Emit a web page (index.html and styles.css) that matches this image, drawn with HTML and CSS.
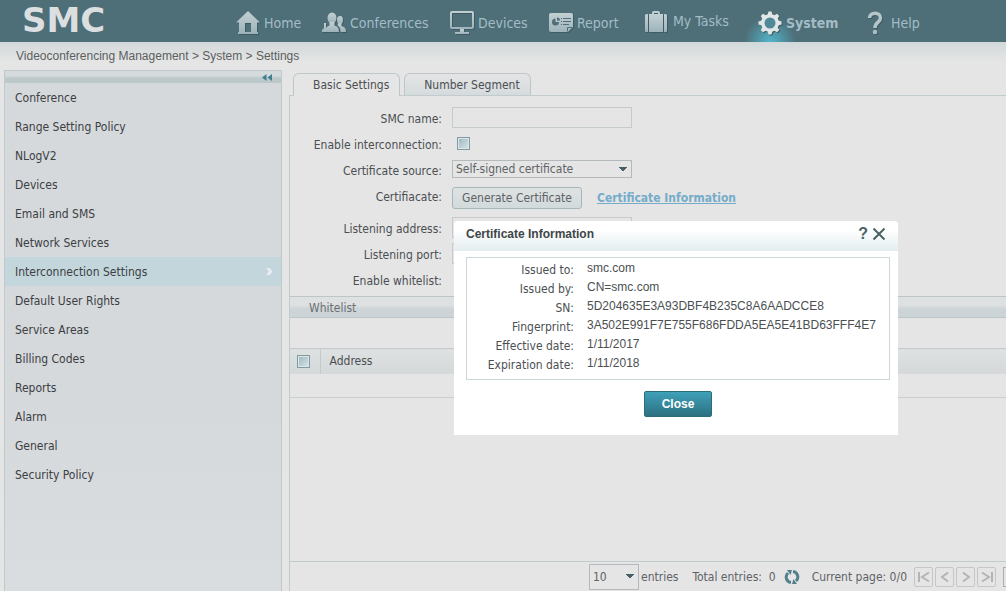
FILE: index.html
```html
<!DOCTYPE html>
<html lang="en">

<head>
    <meta charset="UTF-8">
    <meta name="viewport" content="width=device-width, initial-scale=1.0">
    <title>SMC - Settings</title>
    <link rel="stylesheet" href="styles.css">
</head>

<body>
    <header class="header">
        <a class="logo" href="#">SMC</a>
        <nav class="nav">
            <a href="#">
                <svg width="24" height="24" viewBox="0 0 24 24" fill="url(#steel)">
                    <defs>
                        <linearGradient id="steel" x1="0" y1="0" x2="0" y2="1">
                            <stop offset="0" stop-color="#c3d0d3" />
                            <stop offset="1" stop-color="#9db3b9" />
                        </linearGradient>
                    </defs>
                    <path fill-rule="evenodd" d="M12 0L24 11.500H21V21H22V23H2V21H3V11.500H0ZM9 12V21H15V12Z" />
                </svg>
                <span>Home</span>
            </a>
            <a href="#">
                <svg width="24" height="24" viewBox="0 0 24 24" fill="url(#steel)">
                    <ellipse cx="10" cy="7" rx="4.500" ry="5.500" />
                    <path d="M3 21C3 17 4 16 7.500 14.500V11H12.500V14.500C16 16 17 17 17 21Z" />
                    <ellipse cx="18" cy="9" rx="3" ry="4" />
                    <path d="M16.500 12H19.500V15C22.500 16 24 17 24 21H18.500C18.500 17 17.500 15.500 15.500 14.500Z" />
                    <path d="M0 21V19C0 18 2 18 2 17V12H4V17L5 19V21Z" />
                </svg>
                <span>Conferences</span>
            </a>
            <a href="#">
                <svg width="24" height="24" viewBox="0 0 24 24" fill="url(#steel)">
                    <path fill-rule="evenodd" d="M2 0H22Q24 0 24 2V16Q24 18 22 18H2Q0 18 0 16V2Q0 0 2 0ZM2 2V16H22V2Z" />
                    <path d="M10 18H14V21H19V23H5V21H10Z" />
                </svg>
                <span>Devices</span>
            </a>
            <a href="#">
                <svg width="24" height="24" viewBox="0 0 24 24" fill="url(#steel)">
                    <path d="M2 2H22Q24 2 24 4V16L19 21H2Q0 21 0 19V4Q0 2 2 2Z" />
                    <path d="M6.500 7.500A3.500 3.500 0 1 0 10 11H6.500Z" fill="#4e6e78" />
                    <path d="M8 6.500A3 3 0 0 1 11 9.500H8Z" fill="#4e6e78" />
                    <path d="M12 7.500H13M14 7.500H22M12 10.500H13M14 10.500H22M12 13.500H13M14 13.500H20" stroke="#4e6e78" />
                    <path d="M18.500 20.500V16.500H23" stroke="#4e6e78" fill="none" />
                </svg>
                <span>Report</span>
            </a>
            <a href="#" class="tasks">
                <svg width="24" height="24" viewBox="0 -2 24 24" fill="url(#steel)">
                    <path d="M0 4Q0 3 3 3V21H1Q0 21 0 20ZM4 3H18V21H4ZM19 3Q22 3 22 4V20Q22 21 21 21H19Z" />
                    <path d="M8 3V2Q8 1 9 1H13Q14 1 14 2V3" fill="none" stroke="#c3d0d3" stroke-width="2" />
                </svg>
                <span>My Tasks</span>
            </a>
            <a href="#" class="active">
                <svg width="24" height="24" viewBox="0 0 24 24">
                    <g fill="#e1e6e7">
                        <path id="teeth" d="M9.500 4L10.500 0.500H13.500L14.500 4V20L13.500 23.500H10.500L9.500 20Z" />
                        <use href="#teeth" transform="rotate(45 12 12)" />
                        <use href="#teeth" transform="rotate(90 12 12)" />
                        <use href="#teeth" transform="rotate(135 12 12)" />
                        <circle cx="12" cy="12" r="9" />
                    </g>
                    <circle cx="12" cy="12" r="5.500" fill="#50899a" />
                </svg>
                <span>System</span>
            </a>
            <a href="#" class="help">
                <svg width="16" height="24" viewBox="0 0 16 24" fill="none">
                    <path d="M2.500 7C2.500 0.500 13.500 0.500 13.500 7C13.500 11.500 8 11 8 17" stroke="#b5c5c9" stroke-width="3.500" />
                    <circle cx="8" cy="21" r="2.300" fill="#a9bcc1" />
                </svg>
                <span>Help</span>
            </a>
        </nav>
    </header>

    <div class="breadcrumb">Videoconferencing Management &gt; System &gt; Settings</div>

    <div class="content">
        <aside class="sidebar">
            <div class="sidebar-top">
                <button class="collapse" aria-label="Collapse menu">
                    <svg width="10" height="7" viewBox="0 0 10 7" fill="#3f7f8f">
                        <path d="M4.500 0V7L0 3.500ZM10 0V7L5.500 3.500Z" />
                    </svg>
                </button>
            </div>
            <a href="#">Conference</a>
            <a href="#">Range Setting Policy</a>
            <a href="#">NLogV2</a>
            <a href="#">Devices</a>
            <a href="#">Email and SMS</a>
            <a href="#">Network Services</a>
            <a href="#" class="selected">Interconnection Settings
                <svg width="7" height="7" viewBox="0 0 7 7" fill="#e6eef0">
                    <path d="M0 0H3.500L6.500 3.500L3.500 7H0L3 3.500Z" />
                </svg>
            </a>
            <a href="#">Default User Rights</a>
            <a href="#">Service Areas</a>
            <a href="#">Billing Codes</a>
            <a href="#">Reports</a>
            <a href="#">Alarm</a>
            <a href="#">General</a>
            <a href="#">Security Policy</a>
        </aside>

        <main class="main">
            <div class="tabs">
                <button class="tab current">Basic Settings</button>
                <button class="tab">Number Segment</button>
            </div>
            <div class="panel">
                <form class="form">
                    <label for="smcName">SMC name:</label>
                    <div class="field"><input class="text" type="text" id="smcName"></div>

                    <label for="interconnection">Enable interconnection:</label>
                    <div class="field indent"><input class="check" type="checkbox" id="interconnection"></div>

                    <label for="source">Certificate source:</label>
                    <div class="field">
                        <select class="select" id="source">
                            <option>Self-signed certificate</option>
                        </select>
                    </div>

                    <label for="generate">Certifiacate:</label>
                    <div class="field">
                        <button class="btn" type="button" id="generate">Generate Certificate</button>
                        <a class="info-link" href="#certificate">Certificate Information</a>
                    </div>

                    <label for="address">Listening address:</label>
                    <div class="field"><input class="text" type="text" id="address"></div>

                    <label for="port">Listening port:</label>
                    <div class="field"><input class="text" type="text" id="port"></div>

                    <label for="enableWhitelist">Enable whitelist:</label>
                    <div class="field indent"><input class="check" type="checkbox" id="enableWhitelist"></div>
                </form>

                <h2 class="section">Whitelist</h2>

                <table class="whitelist">
                    <thead>
                        <tr>
                            <th class="check-col"><input class="check" type="checkbox" aria-label="Select all"></th>
                            <th>Address</th>
                        </tr>
                    </thead>
                    <tbody>
                        <tr>
                            <td colspan="2"></td>
                        </tr>
                    </tbody>
                </table>

                <div class="pager">
                    <select class="select page-size" id="pageSize">
                        <option>10</option>
                    </select>
                    <label for="pageSize">entries</label>
                    <span class="total">Total entries:&nbsp; 0</span>
                    <button class="refresh" aria-label="Refresh">
                        <svg width="16" height="16" viewBox="0 0 16 16" fill="none" stroke="#54808c" stroke-width="3">
                            <path d="M7 13.500A5.500 5.500 0 0 1 4 4M9 2.500A5.500 5.500 0 0 1 12 12" />
                            <path d="M3 1H8L6.500 6ZM13 15H8L9.500 10Z" fill="#54808c" stroke="none" />
                        </svg>
                    </button>
                    <span class="page">Current page: 0/0</span>
                    <button class="page-btn" aria-label="First page">
                        <svg width="14" height="12" viewBox="0 0 14 12"><path d="M2 1V11M12 1.500L5 6L12 10.500" /></svg>
                    </button>
                    <button class="page-btn" aria-label="Previous page">
                        <svg width="14" height="12" viewBox="0 0 14 12"><path d="M10 1.500L4 6L10 10.500" /></svg>
                    </button>
                    <button class="page-btn" aria-label="Next page">
                        <svg width="14" height="12" viewBox="0 0 14 12"><path d="M4 1.500L10 6L4 10.500" /></svg>
                    </button>
                    <button class="page-btn" aria-label="Last page">
                        <svg width="14" height="12" viewBox="0 0 14 12"><path d="M12 1V11M2 1.500L9 6L2 10.500" /></svg>
                    </button>
                    <input class="page-input" type="text" aria-label="Go to page">
                </div>
            </div>
        </main>
    </div>

    <div class="dialog" id="certificate" role="dialog" aria-labelledby="dialogTitle">
        <div class="dialog-header">
            <h3 id="dialogTitle">Certificate Information</h3>
            <button class="dialog-icon" aria-label="Help">?</button>
            <button class="dialog-icon" aria-label="Close dialog">
                <svg width="14" height="14" viewBox="0 0 14 14" stroke="#4b6265" stroke-width="2">
                    <path d="M1.500 1.500L12.500 12.500M12.500 1.500L1.500 12.500" />
                </svg>
            </button>
        </div>
        <div class="dialog-body">
            <dl class="details">
                <dt>Issued to:</dt>
                <dd>smc.com</dd>
                <dt>Issued by:</dt>
                <dd>CN=smc.com</dd>
                <dt>SN:</dt>
                <dd>5D204635E3A93DBF4B235C8A6AADCCE8</dd>
                <dt>Fingerprint:</dt>
                <dd>3A502E991F7E755F686FDDA5EA5E41BD63FFF4E7</dd>
                <dt>Effective date:</dt>
                <dd>1/11/2017</dd>
                <dt>Expiration date:</dt>
                <dd>1/11/2018</dd>
            </dl>
            <button class="close-btn">Close</button>
        </div>
    </div>
</body>

</html>
```
FILE: styles.css
```css
* {
    box-sizing: border-box;
}

body {
    margin: 0;
    min-height: 100vh;
    display: flex;
    flex-direction: column;
    overflow: hidden;
    background-color: #e5e5e5;
    font-family: "DejaVu Sans Condensed", "Noto Sans", Tahoma, sans-serif;
    font-size: 12px;
    line-height: 16px;
    color: #4b4f52;
}

a {
    color: inherit;
    text-decoration: none;
}

button,
input,
select {
    font: inherit;
    color: inherit;
    margin: 0;
}

button {
    cursor: pointer;
}

/* header */
.header {
    display: flex;
    height: 42px;
    background-color: #4e6e78;
}

.logo {
    width: 236px;
    padding-left: 22px;
    font-family: "DejaVu Sans", sans-serif;
    font-size: 34px;
    font-weight: bold;
    line-height: 40px;
    color: #dcdfe0;
}

.nav {
    display: grid;
    grid-template-columns: 86px 128px 99px 96px 113px 109px 60px;
}

.nav a {
    display: flex;
    align-items: center;
    gap: 4px;
    padding-top: 3px;
    font-size: 14px;
    color: #a3bdc6;
}

.nav a.tasks {
    padding-top: 0;
}

.nav a.help {
    gap: 8px;
}

.nav svg {
    flex: none;
    filter: drop-shadow(1px 1px 0 #3e5b64);
}

.nav .active {
    margin-left: -20px;
    padding-left: 20px;
    background: radial-gradient(circle 26px at 32px 42px, #52b5cb, rgba(78, 110, 120, 0));
    font-weight: bold;
}

.breadcrumb {
    height: 28px;
    padding: 5px 16px;
    background: linear-gradient(#d2d8da, #e5e5e5 20px);
    font-family: "Liberation Sans", Arial, sans-serif;
    line-height: 18px;
    color: #5c5e60;
}

.content {
    flex: 1;
    display: flex;
    gap: 7px;
    padding-left: 4px;
}

/* sidebar */
.sidebar {
    width: 278px;
    flex: none;
    border: 1px solid #c0c9cc;
    border-bottom: none;
    background: linear-gradient(#d5d9dc 60%, #dadddf);
}

.sidebar-top {
    display: flex;
    justify-content: flex-end;
    align-items: center;
    height: 12px;
    padding-right: 9px;
    background: linear-gradient(#d5dadc 40%, #bdc8cb 60%);
}

.collapse {
    display: flex;
    padding: 0;
    border: none;
    background: none;
}

.sidebar a {
    display: flex;
    align-items: center;
    justify-content: space-between;
    height: 29px;
    padding: 0 8px 0 10px;
    color: #3c4043;
}

.sidebar .selected {
    background-color: #c3d6dc;
}

/* main */
.main {
    flex: 1;
    display: flex;
    flex-direction: column;
    padding-top: 3px;
    min-width: 0;
}

.tabs {
    display: flex;
    gap: 4px;
    padding-left: 4px;
}

.tab {
    height: 22px;
    padding: 0 10px 0 19px;
    border: 1px solid #bcc7ca;
    border-bottom: none;
    border-radius: 6px 6px 0 0;
    background: linear-gradient(#e5e5e5, #d5dbdd);
}

.tab.current {
    height: 23px;
    margin-bottom: -1px;
    background: #e5e5e5;
    z-index: 1;
}

.panel {
    flex: 1;
    display: flex;
    flex-direction: column;
    border: 1px solid #c2cbce;
    border-right: none;
    border-bottom: none;
}

.form {
    display: grid;
    grid-template-columns: 152px 1fr;
    grid-template-rows: 26px 26px 26px 32px 26px 26px 26px;
    column-gap: 10px;
    align-items: center;
    padding: 8px 0 4px;
}

.form label {
    align-self: start;
    padding-top: 7px;
    text-align: right;
}

.field {
    display: flex;
    align-items: center;
    gap: 15px;
}

.indent {
    padding-left: 5px;
}

.text {
    width: 180px;
    height: 21px;
    border: 1px solid #c5cbcd;
    background: #e5e5e5;
}

.check {
    appearance: none;
    display: block;
    width: 13px;
    height: 13px;
    padding: 1px;
    border: 1px solid #7f9ca2;
    background: linear-gradient(135deg, #9dbcc4, #d5e0e3) content-box;
    box-shadow: inset 0 0 0 1px #dfe5e6;
}

.select {
    appearance: none;
    width: 180px;
    height: 18px;
    padding: 0 3px;
    border: 1px solid #b4babc;
    border-radius: 0;
    background: linear-gradient(to bottom right, #475f66 50%, transparent 50%) no-repeat right 4px center / 4px 5px,
        linear-gradient(to bottom left, #475f66 50%, transparent 50%) no-repeat right 8px center / 4px 5px;
    line-height: 16px;
    color: #5f6365;
}

.btn {
    width: 130px;
    height: 22px;
    padding: 0;
    border: 1px solid #a6b7ba;
    border-radius: 3px;
    background: linear-gradient(#dfe2e3, #d2dadc);
    color: #5f6365;
}

.info-link {
    font-weight: bold;
    text-decoration: underline;
    color: #74acc9;
}

.section {
    height: 22px;
    margin: 0;
    padding: 0 19px;
    border-top: 1px solid #bcc5c8;
    border-bottom: 1px solid #bcc5c8;
    background: linear-gradient(#dee1e2 40%, #cdd4d7 60%);
    font-size: 12px;
    font-weight: normal;
    line-height: 22px;
    color: #6c7072;
}

.whitelist {
    width: 100%;
    margin-top: 30px;
    border-collapse: collapse;
}

.whitelist th {
    height: 25px;
    padding: 0 9px;
    border-top: 1px solid #c5cbcd;
    background: linear-gradient(#dfe1e2, #d3d8d8);
    font-weight: normal;
    text-align: left;
}

.whitelist .check-col {
    width: 30px;
    padding: 0 7px;
    border-right: 1px solid #c5cbcd;
}

.whitelist td {
    height: 24px;
    padding: 0;
    border-bottom: 1px solid #c9cecf;
}

/* pager */
.pager {
    display: flex;
    align-items: center;
    height: 30px;
    margin-top: auto;
    padding-left: 299px;
    border-top: 1px solid #c2cbce;
    white-space: nowrap;
    color: #5f6365;
}

.pager > * {
    flex: none;
}

.page-size {
    width: 50px;
    height: 26px;
    margin-right: 2px;
}

.total {
    margin-left: 14px;
}

.refresh {
    display: flex;
    margin: 0 12px 0 8px;
    padding: 0;
    border: none;
    background: none;
}

.page {
    margin-right: 7px;
}

.page-btn {
    display: flex;
    align-items: center;
    justify-content: center;
    width: 19px;
    height: 20px;
    margin-right: 2px;
    padding: 0;
    border: 1px solid #c4c6c7;
    border-radius: 2px;
    background: none;
}

.page-btn svg {
    flex: none;
    fill: none;
    stroke: #b2b5b6;
    stroke-width: 2;
}

.page-input {
    width: 40px;
    height: 20px;
    margin-left: 5px;
    border: 1px solid #a9afb1;
    background: #e5e5e5;
}

/* certificate dialog */
.dialog {
    position: absolute;
    top: 221px;
    left: 454px;
    width: 444px;
    border-radius: 4px 4px 0 0;
    background-color: #fff;
    font-family: "Liberation Sans", Arial, sans-serif;
}

.dialog-header {
    display: flex;
    align-items: center;
    gap: 4px;
    height: 30px;
    padding: 0 12px 5px;
    border-radius: 4px 4px 0 0;
    background: linear-gradient(#fff 30%, #e3edef);
}

.dialog-header h3 {
    flex: 1;
    margin: 0;
    font-size: 12px;
    color: #3f4548;
}

.dialog-icon {
    display: flex;
    padding: 0;
    border: none;
    background: none;
    font-size: 16px;
    font-weight: bold;
    color: #4b6265;
}

.dialog-body {
    padding: 6px 8px 18px 12px;
}

.details {
    display: grid;
    grid-template-columns: 107px 1fr;
    grid-auto-rows: 19px;
    column-gap: 13px;
    margin: 0 0 11px;
    padding: 2px 0 5px;
    border: 1px solid #ccd7d9;
}

.details dt {
    padding-top: 2px;
    font-family: "DejaVu Sans Condensed", "Noto Sans", Tahoma, sans-serif;
    text-align: right;
}

.details dd {
    margin: 0;
}

.close-btn {
    display: block;
    width: 68px;
    height: 26px;
    margin: 0 auto;
    padding: 0;
    border: 1px solid #2d6b7b;
    border-radius: 2px;
    background: linear-gradient(#3fa1b8, #2c7081);
    font-weight: bold;
    color: #fff;
}
```
